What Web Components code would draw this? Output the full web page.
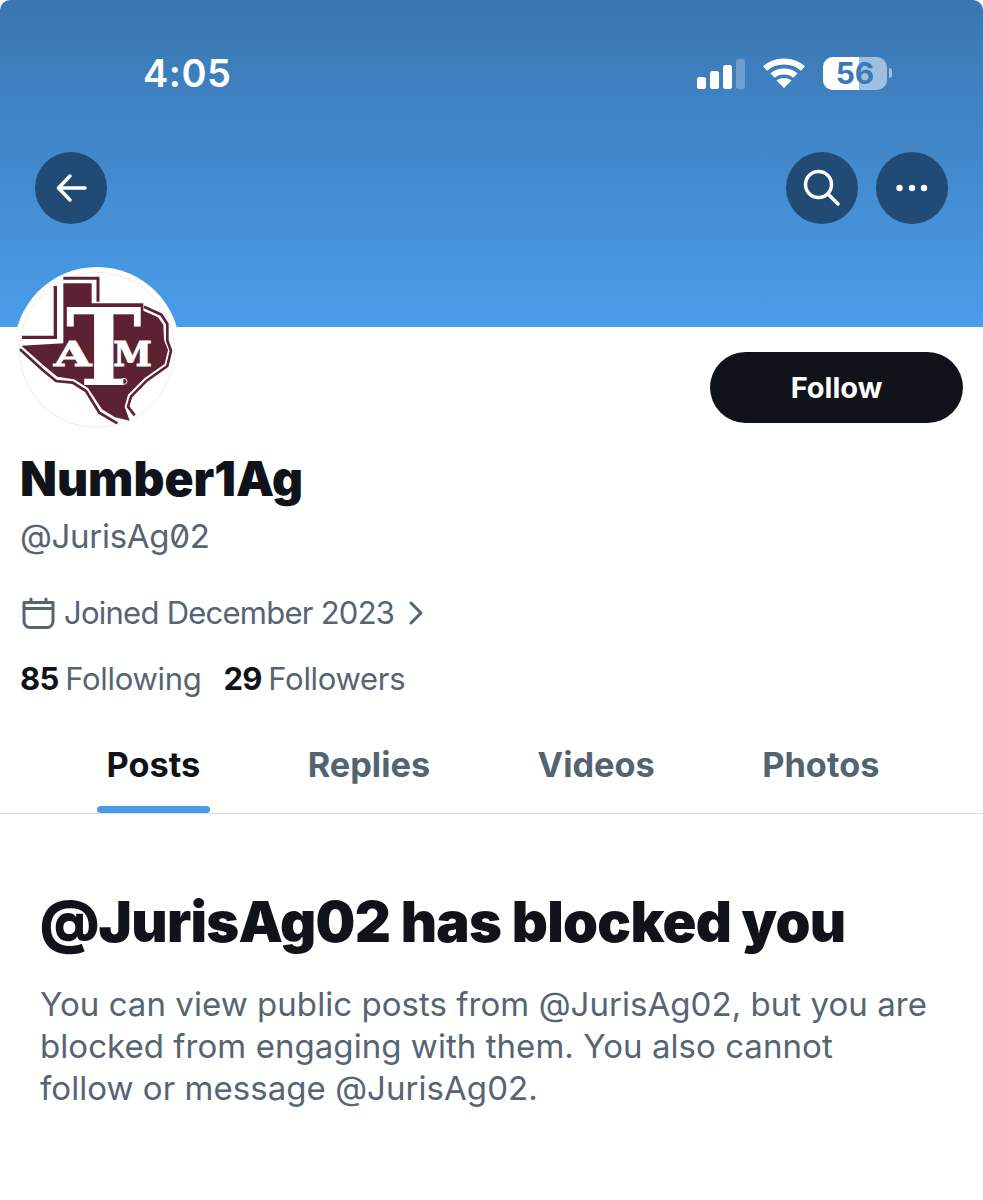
<!DOCTYPE html>
<html>
<head>
<meta charset="utf-8">
<title>Number1Ag</title>
<style>
  html, body { margin: 0; background: #fff; }
  body { font-family: Inter, "Noto Sans", sans-serif; color: #10141a; width: 983px; height: 1200px; overflow: hidden; }
</style>
</head>
<body>
<profile-banner></profile-banner>
<profile-head></profile-head>
<profile-meta></profile-meta>
<profile-tabs></profile-tabs>
<blocked-notice handle="@JurisAg02"></blocked-notice>

<script>
class StatusBar extends HTMLElement {
    connectedCallback() {
        this.attachShadow({mode: "open"}).innerHTML = `
        <style>
            :host { display: flex; justify-content: space-between; align-items: center; height: 40px; padding: 53px 91px 0 143px; }
            .time { color: #fff; font-size: 38px; font-weight: 600; letter-spacing: 0.5px; }
            .icons { display: flex; align-items: center; gap: 17px; }
            .battery { position: relative; width: 64px; height: 33px; border-radius: 10px; background: rgba(255,255,255,.5); }
            .fill { position: absolute; left: 0; top: 0; bottom: 0; width: 36px; background: #fff; border-radius: 10px 0 0 10px; }
            .num { position: absolute; left: 0; right: 0; top: 0; height: 33px; text-align: center; line-height: 33px; font-size: 30px; font-weight: 700; color: #3b79b5; }
            .wrap { display: flex; align-items: center; gap: 2px; }
            .nub { width: 3px; height: 10px; background: rgba(255,255,255,.5); border-radius: 0 3px 3px 0; }
        </style>
        <div class="time">4:05</div>
        <div class="icons">
            <svg width="48" height="32" viewBox="0 0 48 32">
                <rect x="0" y="20" width="9" height="12" rx="2.5" fill="#fff"/>
                <rect x="13" y="14" width="9" height="18" rx="2.5" fill="#fff"/>
                <rect x="26" y="8" width="9" height="24" rx="2.5" fill="#fff"/>
                <rect x="39" y="2" width="9" height="30" rx="2.5" fill="#fff" fill-opacity=".25"/>
            </svg>
            <svg width="44" height="32" viewBox="0 0 44 32" fill="none" stroke="#fff" stroke-width="6">
                <path d="M3 11.5C13.500 2 30.500 2 41 11.500"/>
                <path d="M10.500 18.500C16.500 13 27.500 13 33.500 18.500"/>
                <path d="M22 31l-7.500-7.500C18 20 26 20 29.500 23.500z" fill="#fff" stroke="none"/>
            </svg>
            <div class="wrap">
                <div class="battery"><div class="fill"></div><div class="num">56</div></div>
                <div class="nub"></div>
            </div>
        </div>`;
    }
}
customElements.define('status-bar', StatusBar);

class RoundButton extends HTMLElement {
    connectedCallback() {
        const shadow = this.attachShadow({mode: "open"});
        shadow.innerHTML = `
        <style>
            :host { display: flex; width: 72px; height: 72px; border-radius: 50%; background: #214b74; align-items: center; justify-content: center; }
        </style>
        <slot></slot>`;
    }
}
customElements.define('round-button', RoundButton);

class ProfileBanner extends HTMLElement {
    connectedCallback() {
        this.attachShadow({mode: "open"}).innerHTML = `
        <style>
            :host { display: block; height: 327px; background: linear-gradient(#3a76b0, #4a9dea); border-radius: 10px 10px 0 0; box-sizing: border-box; }
            .nav { display: flex; justify-content: space-between; padding: 59px 35px 0 35px; }
            .right { display: flex; gap: 18px; }
        </style>
        <status-bar></status-bar>
        <div class="nav">
            <round-button>
                <svg width="32" height="32" viewBox="0 0 32 32" fill="none" stroke="#fff" stroke-width="3.500" stroke-linecap="round" stroke-linejoin="round"><path d="M3.500 16H30M15 4L3.500 16L15 28"/></svg>
            </round-button>
            <div class="right">
                <round-button>
                    <svg width="38" height="38" viewBox="0 0 38 38" fill="none" stroke="#fff" stroke-width="3.500" stroke-linecap="round"><circle cx="15.500" cy="15.500" r="13"/><path d="M25 25l10 10"/></svg>
                </round-button>
                <round-button>
                    <svg width="34" height="8" viewBox="0 0 34 8" fill="#fff"><circle cx="4.500" cy="4" r="3.200"/><circle cx="17" cy="4" r="3.200"/><circle cx="29" cy="4" r="3.200"/></svg>
                </round-button>
            </div>
        </div>`;
    }
}
customElements.define('profile-banner', ProfileBanner);

class AggieLogo extends HTMLElement {
    connectedCallback() {
        this.attachShadow({mode: "open"}).innerHTML = `
        <style>
            :host { display: block; width: 200px; height: 190px; }
            text { font-family: "DejaVu Serif", "Liberation Serif", serif; font-weight: 700; fill: #fff; }
            .heavy { stroke: #fff; stroke-width: 3; }
        </style>
        <svg width="200" height="190" viewBox="0 0 600 570">
            <!-- state shape, drawn over the 3x crop -->
            <path fill="#5c2232" d="M190 100H275V160H430V182L474 202L490 224L492 270L504 300L494 342L434 384L384 434L374 470L389 512L345 502L306 478L264 414L222 388L172 380L132 347L64 287L190 280z"/>
            <path fill="none" stroke="#5c2232" stroke-width="10" d="M166 108V262H66"/>
            <path fill="none" stroke="#5c2232" stroke-width="9" d="M190 85H294V155"/>
            <path fill="none" stroke="#5c2232" stroke-width="8" d="M60 298L128 360L168 393L218 398L258 423L298 488L352 520"/>
            <path fill="none" stroke="#5c2232" stroke-width="8" d="M432 170L484 194L502 222L502 272L513 302L502 348L440 392L393 440L384 470L404 496"/>
            <text x="311" y="405" font-size="322" text-anchor="middle" textLength="228" lengthAdjust="spacingAndGlyphs">T</text>
            <text class="heavy" x="218" y="347" font-size="98" text-anchor="middle" textLength="112" lengthAdjust="spacingAndGlyphs">A</text>
            <text class="heavy" x="398" y="347" font-size="98" text-anchor="middle" textLength="116" lengthAdjust="spacingAndGlyphs">M</text>
            <circle cx="372" cy="394" r="9" fill="none" stroke="#fff" stroke-width="2.500"/>
        </svg>`;
    }
}
customElements.define('aggie-logo', AggieLogo);

class ProfileHead extends HTMLElement {
    connectedCallback() {
        this.attachShadow({mode: "open"}).innerHTML = `
        <style>
            :host { display: flex; justify-content: space-between; align-items: flex-start; height: 111px; padding: 0 20px 0 14px; }
            .avatar { width: 166px; height: 166px; margin-top: -60px; border-radius: 50%; background: #fff; position: relative; overflow: hidden; }
            .ring { position: absolute; inset: 5px; border-radius: 50%; border: 1px solid #ececec; }
            aggie-logo { position: absolute; left: -14px; top: -17px; }
            .follow { margin-top: 25px; width: 253px; height: 71px; border-radius: 36px; background: #10141a; color: #fff; display: flex; align-items: center; justify-content: center; font-size: 29px; font-weight: 700; }
        </style>
        <div class="avatar"><div class="ring"></div><aggie-logo></aggie-logo></div>
        <div class="follow">Follow</div>`;
    }
}
customElements.define('profile-head', ProfileHead);

class ProfileMeta extends HTMLElement {
    connectedCallback() {
        this.attachShadow({mode: "open"}).innerHTML = `
        <style>
            :host { display: block; padding: 0 20px; color: #566573; }
            .name { font-size: 48px; line-height: 58px; font-weight: 900; color: #10141a; margin-top: 12px; }
            .handle { font-size: 33px; line-height: 40px; margin-top: 8px; letter-spacing: -0.3px; font-feature-settings: "zero"; }
            .joined { display: flex; align-items: center; gap: 9px; font-size: 31px; line-height: 40px; margin-top: 37px; letter-spacing: -0.75px; padding-left: 2px; }
            .joined svg:last-child { margin-left: 3px; }
            .counts { display: flex; gap: 22px; font-size: 31px; line-height: 40px; margin-top: 26px; letter-spacing: -0.3px; }
            b { color: #10141a; font-weight: 700; margin-right: -2px; letter-spacing: -0.6px; }
        </style>
        <div class="name">Number1Ag</div>
        <div class="handle">@JurisAg02</div>
        <div class="joined">
            <svg width="33" height="34" viewBox="0 0 33 34" fill="none" stroke="#566573" stroke-width="3" stroke-linecap="round" stroke-linejoin="round"><path d="M2 6.500h29v19a6 6 0 0 1-6 6H8a6 6 0 0 1-6-6zM2 12.500h29M9 3v3.500M24 3v3.500"/></svg>
            <span>Joined December 2023</span>
            <svg width="20" height="26" viewBox="0 0 20 26" fill="none" stroke="#566573" stroke-width="3" stroke-linecap="round" stroke-linejoin="round"><path d="M5 3l10 10L5 23"/></svg>
        </div>
        <div class="counts">
            <span><b>85</b> Following</span>
            <span><b>29</b> Followers</span>
        </div>`;
    }
}
customElements.define('profile-meta', ProfileMeta);

class ProfileTabs extends HTMLElement {
    connectedCallback() {
        this.attachShadow({mode: "open"}).innerHTML = `
        <style>
            :host { display: flex; gap: 88.500px; height: 83px; margin-top: 31px; padding-left: 97px; border-bottom: 1px solid #dcdfe2; }
            .tab { position: relative; display: flex; align-items: center; font-size: 34.300px; font-weight: 700; color: #536471; height: 69px; padding: 0 9.500px 14px; }
            .tab.on { color: #10141a; }
            .tab.on::after { content: ""; position: absolute; left: 0; right: 0; bottom: 0; height: 7px; border-radius: 4px; background: #4a9be8; }
        </style>
        <div class="tab on">Posts</div>
        <div class="tab">Replies</div>
        <div class="tab">Videos</div>
        <div class="tab">Photos</div>`;
    }
}
customElements.define('profile-tabs', ProfileTabs);

class BlockedNotice extends HTMLElement {
    connectedCallback() {
        const h = this.getAttribute('handle');
        this.attachShadow({mode: "open"}).innerHTML = `
        <style>
            :host { display: block; padding: 75px 55px 0 40px; }
            h2 { margin: 0; font-size: 56px; line-height: 66px; font-weight: 900; letter-spacing: -0.7px; color: #10141a; white-space: nowrap; }
            p { margin: 28px 0 0; font-size: 33px; line-height: 42px; letter-spacing: 0.05px; color: #566573; }
        </style>
        <h2>${h} has blocked you</h2>
        <p>You can view public posts from ${h}, but you are blocked from engaging with them. You also cannot follow or message ${h}.</p>`;
    }
}
customElements.define('blocked-notice', BlockedNotice);
</script>
</body>
</html>
